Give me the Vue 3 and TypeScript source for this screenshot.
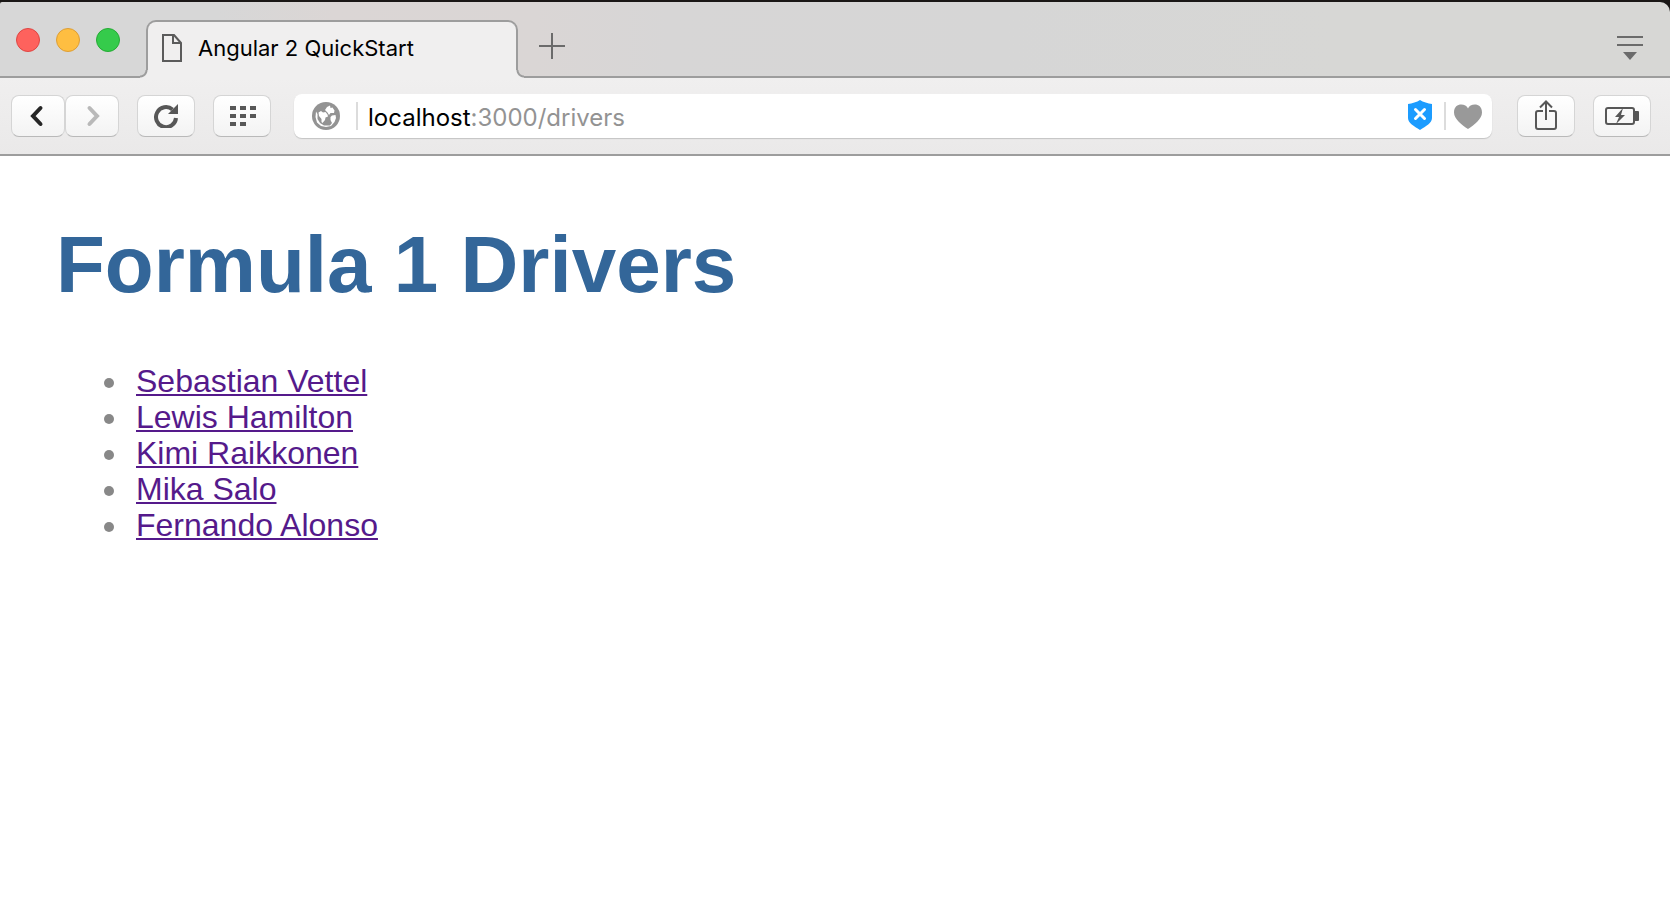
<script setup lang="ts">
import { computed, ref } from 'vue'

interface Driver {
  slug: string
  name: string
}

const tabTitle = 'Angular 2 QuickStart'
const address = ref('localhost:3000/drivers')

const host = computed(() => address.value.split(/[:/]/)[0])
const rest = computed(() => address.value.slice(host.value.length))

const drivers: Driver[] = [
  { slug: 'vettel', name: 'Sebastian Vettel' },
  { slug: 'hamilton', name: 'Lewis Hamilton' },
  { slug: 'raikkonen', name: 'Kimi Raikkonen' },
  { slug: 'salo', name: 'Mika Salo' },
  { slug: 'alonso', name: 'Fernando Alonso' },
]
</script>

<template>
  <div class="window">
    <header class="chrome">
      <div class="tab-strip">
        <div class="lights">
          <button class="light close" type="button" aria-label="Close"></button>
          <button class="light minimise" type="button" aria-label="Minimise"></button>
          <button class="light zoom" type="button" aria-label="Zoom"></button>
        </div>
        <button class="tab" type="button">
          <svg width="20" height="28" viewBox="0 0 20 28" fill="none" stroke="#5b5b5b" stroke-width="2" aria-hidden="true">
            <path d="M1 1H12L19 9V27H1Z" />
            <path d="M11 1V9H19" />
          </svg>
          <span>{{ tabTitle }}</span>
        </button>
        <button class="new-tab" type="button" aria-label="New tab">
          <svg width="26" height="26" viewBox="0 0 26 26" stroke="#6b6b6b" stroke-width="2" aria-hidden="true">
            <path d="M13 0V26M0 13H26" />
          </svg>
        </button>
        <button class="tab-menu" type="button" aria-label="Tab menu">
          <svg width="26" height="24" viewBox="0 0 26 24" aria-hidden="true">
            <path d="M0 1H26M0 9H26" stroke="#6b6b6b" stroke-width="2" />
            <path d="M6 16H20L13 24Z" fill="#6b6b6b" />
          </svg>
        </button>
      </div>

      <nav class="toolbar" aria-label="Browser toolbar">
        <div class="history">
          <button class="tool" type="button" aria-label="Back">
            <svg width="16" height="22" viewBox="0 0 16 22" fill="none" stroke="#262626" stroke-width="4" aria-hidden="true">
              <path d="M10.500 3L3 11L10.500 19" stroke-linecap="round" />
            </svg>
          </button>
          <button class="tool" type="button" aria-label="Forward">
            <svg width="16" height="22" viewBox="0 0 16 22" fill="none" stroke="#b9b9b9" stroke-width="4" aria-hidden="true">
              <path d="M5.500 3L13 11L5.500 19" stroke-linecap="round" />
            </svg>
          </button>
        </div>
        <button class="tool" type="button" aria-label="Reload">
          <svg width="24" height="24" viewBox="0 0 24 24" aria-hidden="true">
            <path d="M18.500 5.500A10 10 0 1 0 22 14" fill="none" stroke="#575757" stroke-width="4" />
            <path d="M24 0V10H14Z" fill="#575757" />
          </svg>
        </button>
        <button class="tool" type="button" aria-label="Speed dial">
          <svg width="28" height="20" viewBox="0 0 28 20" fill="#575757" aria-hidden="true">
            <path d="M2 0h6v4H2zM12 0h6v4h-6zM22 0h6v4h-6zM2 8h6v4H2zM12 8h6v4h-6zM22 8h6v4h-6zM2 16h6v4H2zM12 16h6v4h-6z" />
          </svg>
        </button>

        <form class="address" @submit.prevent>
          <svg class="globe" width="28" height="28" viewBox="0 0 28 28" aria-hidden="true">
            <circle cx="14" cy="14" r="14" fill="#939393" />
            <g fill="#fff">
              <path d="M4 9.500L5.500 12L5.500 17L8 21L12 23.500L18 23.500L20 21L18.500 18L18.500 15L20 13.500L23.500 13L24 16L22.500 20L19 24L14 25L9 24L5 20.500L3.500 15Z" />
              <path d="M6.500 10.500L9 9L11 10.500L13.500 10L15.500 12.500L16 14.500L13.500 15.500L13 18L10.500 21L9.500 20L9.500 17L7 14Z" />
              <path d="M13 8L15 5L18 3.500L18.500 6L20.500 5.500L22.500 8.500L22 11L18.500 11L17 13L15.500 10.500Z" />
            </g>
          </svg>
          <span class="divider"></span>
          <div class="url">
            <span class="url-text" aria-hidden="true"><b>{{ host }}</b>{{ rest }}</span>
            <input v-model="address" class="url-input" type="text" aria-label="Address" spellcheck="false" />
          </div>
          <button type="button" aria-label="Ad blocker">
            <svg width="24" height="32" viewBox="0 0 24 32" aria-hidden="true">
              <path d="M12 0C15 2 20 3.500 24 4V18C24 23 18 26 12 30C6 26 0 23 0 18V4C4 3.500 9 2 12 0Z" fill="#1c9cff" />
              <path d="M7.500 9.500L16.500 18.500M16.500 9.500L7.500 18.500" stroke="#fff" stroke-width="3" stroke-linecap="round" />
            </svg>
          </button>
          <span class="divider short"></span>
          <button type="button" aria-label="Bookmark">
            <svg width="28" height="25" viewBox="0 0 28 25" aria-hidden="true">
              <path d="M14 4.500C16 -1 28 -2 28 8.500C28 15 20 21 14 25C8 21 0 15 0 8.500C0 -2 12 -1 14 4.500Z" fill="#999" />
            </svg>
          </button>
        </form>

        <button class="tool" type="button" aria-label="Share">
          <svg width="22" height="32" viewBox="0 0 22 32" fill="none" stroke="#575757" stroke-width="2" aria-hidden="true">
            <path d="M8 11H3Q1 11 1 13V27Q1 29 3 29H19Q21 29 21 27V13Q21 11 19 11H14" />
            <path d="M11 20V2M5 7.500L11 1.500L17 7.500" />
          </svg>
        </button>
        <button class="tool" type="button" aria-label="Battery saver">
          <svg width="34" height="18" viewBox="0 0 34 18" aria-hidden="true">
            <rect x="1" y="1" width="28" height="16" rx="2" fill="none" stroke="#575757" stroke-width="2" />
            <path d="M30 4H33Q34 4 34 5V13Q34 14 33 14H30Z" fill="#575757" />
            <path d="M18 1L10 10H14L11 17L20 8H16Z" fill="#575757" />
          </svg>
        </button>
      </nav>
    </header>

    <main class="page">
      <h1>Formula 1 Drivers</h1>
      <ul>
        <li v-for="driver in drivers" :key="driver.slug">
          <a :href="`#/drivers/${driver.slug}`">{{ driver.name }}</a>
        </li>
      </ul>
    </main>
  </div>
</template>

<style>
body {
  margin: 0;
  background: #fff;
}
</style>

<style scoped>
.window {
  --line: #9d9d9d;
  --strip: #d7d7d7;
  --bar: #f0efef;
  min-height: 100vh;
  background: #fff;
  font-family: "Liberation Sans", Arial, sans-serif;
}

button {
  padding: 0;
  border: 0;
  background: none;
  font: inherit;
}

svg {
  display: block;
  flex: none;
}

.chrome {
  border-top: 2px solid #1a1716;
  background: #1a1716;
  font-family: Inter, "Noto Sans", sans-serif;
}

.tab-strip {
  display: flex;
  box-sizing: border-box;
  height: 76px;
  border-bottom: 2px solid var(--line);
  border-radius: 2px 10px 0 0;
  background: linear-gradient(to right, #d7d7d7 13%, #dbd6d5 20%, #dad6d5 32%, #d7d6d6 40%, #d6d6d6 60%, #d7d7d5 80%);
}

.lights {
  display: flex;
  gap: 16px;
  width: 130px;
  padding: 26px 0 0 16px;
}

.light {
  width: 24px;
  height: 24px;
  border: 1px solid;
  border-radius: 50%;
}

.close {
  border-color: #de4643;
  background: #fe625d;
}

.minimise {
  border-color: #dd9e36;
  background: #febe41;
}

.zoom {
  border-color: #25ab34;
  background: #35cb4b;
}

.tab {
  position: relative;
  display: flex;
  align-items: center;
  gap: 16px;
  box-sizing: border-box;
  width: 372px;
  margin: 18px 0 -2px;
  padding: 0 14px 4px;
  border: 2px solid var(--line);
  border-bottom: 0;
  border-radius: 10px 10px 0 0;
  background: var(--bar);
  color: #000;
  font-size: 22px;
  white-space: nowrap;
}

.tab::before,
.tab::after {
  content: "";
  position: absolute;
  bottom: 0;
  width: 8px;
  height: 8px;
}

.tab::before {
  left: -8px;
  background: radial-gradient(circle at 0 0, var(--strip) 5px, var(--line) 6px, var(--line) 7px, var(--bar) 8px);
}

.tab::after {
  right: -8px;
  background: radial-gradient(circle at 100% 0, #d9d6d5 5px, var(--line) 6px, var(--line) 7px, var(--bar) 8px);
}

.new-tab {
  align-self: flex-start;
  margin: 31px 0 0 21px;
}

.tab-menu {
  align-self: flex-start;
  margin: 34px 27px 0 auto;
}

.toolbar {
  display: flex;
  align-items: center;
  gap: 18px;
  box-sizing: border-box;
  height: 78px;
  padding: 0 19px 0 11px;
  border-bottom: 2px solid var(--line);
  background: linear-gradient(#f0efef, #eae9e9);
}

.history {
  display: flex;
}

.history .tool {
  width: 54px;
}

.tool {
  display: flex;
  align-items: center;
  justify-content: center;
  box-sizing: border-box;
  width: 58px;
  height: 42px;
  border: 1px solid #d5d5d5;
  border-bottom-color: #b9b9b9;
  border-radius: 8px;
  background: linear-gradient(#fff, #f3f3f3);
}

.address {
  display: flex;
  flex: 1;
  align-items: center;
  box-sizing: border-box;
  height: 44px;
  margin: 0 7px 0 5px;
  padding: 0 10px 0 18px;
  border-radius: 8px;
  background: #fff;
  box-shadow: 0 1px 1px #c4c4c4;
}

.divider {
  width: 2px;
  height: 28px;
  margin: 0 10px 0 16px;
  background: #dcdcdc;
}

.divider.short {
  margin: 0 8px 0 12px;
}

.url {
  display: grid;
  flex: 1;
  align-items: center;
  padding-top: 3px;
  font-size: 24px;
  line-height: 32px;
}

.url-text,
.url-input {
  grid-area: 1 / 1;
  min-width: 0;
}

.url-text {
  color: #939393;
  white-space: pre;
}

.url-text b {
  color: #000;
  font-weight: 400;
}

.url-input {
  padding: 0;
  border: 0;
  outline: 0;
  background: transparent;
  color: transparent;
  caret-color: #000;
  font: inherit;
}

.page {
  padding: 63px 56px;
}

h1 {
  margin: 0;
  color: #369;
  font-size: 80px;
  line-height: 92px;
}

ul {
  margin: 0;
  padding: 52px 0 0 80px;
  font-size: 32px;
  line-height: 36px;
  list-style: none;
}

li::before {
  content: "";
  display: inline-block;
  width: 10px;
  height: 10px;
  margin: 0 22px 0 -32px;
  border-radius: 50%;
  background: #888;
  vertical-align: 4px;
}

a {
  color: #551a8b;
  text-decoration-thickness: 2px;
  text-underline-offset: 2px;
  text-decoration-skip-ink: none;
}
</style>
